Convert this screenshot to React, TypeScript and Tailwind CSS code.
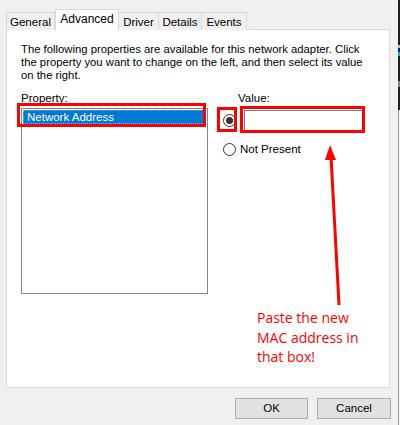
import React from "react";

const tabs = [
  { name: "General", w: "w-[49px]" },
  { name: "Advanced", w: "w-[64px]", active: true },
  { name: "Driver", w: "w-[40px]" },
  { name: "Details", w: "w-[43px]" },
  { name: "Events", w: "w-[45px]" },
];

function Radio({ checked }: { checked?: boolean }) {
  return (
    <div className="w-[13px] h-[13px] rounded-full border border-[#333] bg-white flex items-center justify-center shrink-0">
      {checked && <div className="w-[7px] h-[7px] rounded-full bg-[#333]" />}
    </div>
  );
}

export default function App() {
  return (
    <div className="relative w-[400px] h-[425px] bg-[#f0f0f0] flex overflow-hidden text-[12px] leading-[13px] text-black font-['Liberation_Sans',Arial,sans-serif]">
      <div className="w-[398px] flex flex-col pl-[6px] pt-[9px]">
        {/* tabs */}
        <div className="flex items-end h-[21px] -mb-px relative z-10">
          {tabs.map((t) =>
            t.active ? (
              <div
                key={t.name}
                className={`${t.w} h-[21px] bg-white border border-b-0 border-[#d9d9d9] flex justify-center pt-[3px] text-[12px]`}
              >
                {t.name}
              </div>
            ) : (
              <div
                key={t.name}
                className={`${t.w} h-[18px] bg-[#f0f0f0] border border-b-0 border-l-0 first:border-l border-[#d9d9d9] flex justify-center pt-[3px] text-[11.5px]`}
              >
                {t.name}
              </div>
            )
          )}
        </div>

        {/* panel */}
        <div className="w-[384px] h-[359px] bg-white border border-[#d9d9d9] px-[14px] pt-[13px]">
          <p className="whitespace-nowrap text-[11.3px] leading-[13px]">
            The following properties are available for this network adapter. Click
            <br />
            the property you want to change on the left, and then select its value
            <br />
            on the right.
          </p>

          <div className="flex mt-[10px]">
            <div className="w-[187px] flex flex-col">
              <div className="text-[11.5px]">Property:</div>
              <div className="mt-[3px] h-[186px] border border-[#828790] p-px">
                <div className="h-[14px] bg-[#0078d7] text-white pl-[3px] text-[11.5px] leading-[12px] border border-dotted border-[#7fb8e8]">
                  Network Address
                </div>
              </div>
            </div>

            <div className="flex flex-col ml-[15px]">
              <div className="pl-[15px] text-[11.5px]">Value:</div>
              <div className="flex items-center mt-[4px] h-[22px]">
                <Radio checked />
                <div className="ml-[8px] w-[120px] h-[21px] border border-[#7a7a7a] bg-white" />
              </div>
              <div className="flex items-center mt-[11px] h-[14px]">
                <Radio />
                <span className="ml-[4px] text-[11.5px]">Not Present</span>
              </div>
            </div>
          </div>
        </div>

        {/* buttons */}
        <div className="flex justify-end gap-[9px] mt-[10px] pr-[7px]">
          <button className="w-[73px] h-[21px] bg-[#e1e1e1] border border-[#adadad] text-[11.5px]">
            OK
          </button>
          <button className="w-[74px] h-[21px] bg-[#e1e1e1] border border-[#adadad] text-[11.5px]">
            Cancel
          </button>
        </div>
      </div>

      {/* edge of window behind */}
      <div className="w-[2px] flex flex-col">
        <div className="h-[110px] bg-[#1f1f1f] flex flex-col pt-[45px]">
          <div className="h-[3px] bg-[#c8b89a]" />
          <div className="h-[4px] bg-[#1010c0]" />
          <div className="h-[4px] bg-[#10c080]" />
          <div className="h-[22px] mt-[3px]" />
          <div className="h-[6px] bg-[#808080]" />
        </div>
        <div className="flex-1 border-l border-[#a0a0a0]" />
      </div>

      {/* red annotations */}
      <div className="absolute left-[17px] top-[103px] w-[189px] h-[24px] border-[3px] border-[#ff0000]" />
      <div className="absolute left-[217px] top-[107px] w-[20px] h-[25px] border-[3px] border-[#ff0000]" />
      <div className="absolute left-[240px] top-[106px] w-[125px] h-[27px] border-[3px] border-[#ff0000]" />
      <svg className="absolute left-0 top-0" width="400" height="425" viewBox="0 0 400 425">
        <line x1="339" y1="305" x2="331" y2="156" stroke="#ff0000" strokeWidth="3" />
        <polygon points="330,145 325,160 336,160" fill="#ff0000" />
      </svg>
      <div className="absolute left-[257px] top-[308px] text-[#ff0000] text-[14px] leading-[19.5px] font-['Open_Sans',sans-serif]">
        Paste the new
        <br />
        MAC address in
        <br />
        that box!
      </div>
    </div>
  );
}
